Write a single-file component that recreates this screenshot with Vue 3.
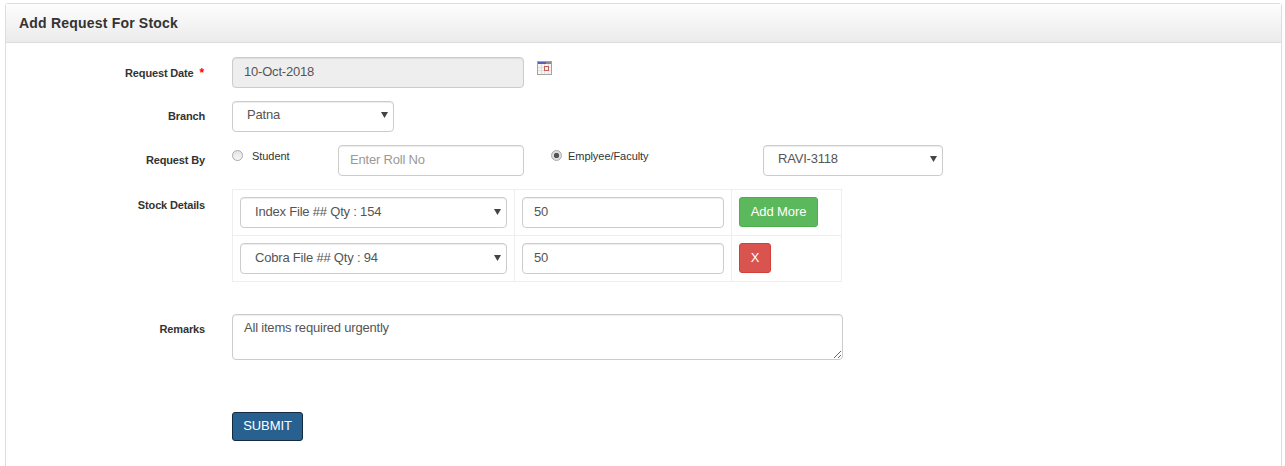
<script setup>
const rows = [
  { name: 'Index File ## Qty : 154', qty: '50', add: true },
  { name: 'Cobra File ## Qty : 94', qty: '50', add: false }
]
</script>

<template>
  <div class="page">
    <section class="panel">
      <header class="panel-head"><h1>Add Request For Stock</h1></header>
      <form class="panel-body" @submit.prevent>
        <div class="row row-date">
          <label class="lbl">Request Date <span class="req">*</span></label>
          <input class="ctl date" value="10-Oct-2018" disabled />
          <svg class="cal" width="15" height="14" viewBox="0 0 15 14">
            <rect x="0.5" y="0.5" width="14" height="13" fill="#f7f5f3" stroke="#a5a3a0" />
            <rect x="1" y="1" width="13" height="2" fill="#8c8c8c" />
            <rect x="1" y="1" width="8" height="2" fill="#5a5fb8" />
            <path d="M1 6.5h13M1 9.5h13M4.5 3v10M7.5 3v10M11.5 3v10" stroke="#e2dfdc" stroke-width="1" fill="none" />
            <rect x="7.5" y="5.5" width="4" height="4" fill="#f6eeee" stroke="#c0605e" />
          </svg>
        </div>

        <div class="row">
          <label class="lbl up">Branch</label>
          <select class="ctl sel branch"><option>Patna</option></select>
        </div>

        <div class="row">
          <label class="lbl up">Request By</label>
          <div class="by">
            <label class="radio student"><input type="radio" name="by" /><span>Student</span></label>
            <input class="ctl roll" placeholder="Enter Roll No" />
            <label class="radio staff"><input type="radio" name="by" checked /><span>Emplyee/Faculty</span></label>
            <select class="ctl sel staff-sel"><option>RAVI-3118</option></select>
          </div>
        </div>

        <div class="row row-stock">
          <label class="lbl">Stock Details</label>
          <table class="stock">
            <tbody>
              <tr v-for="r in rows" :key="r.name">
                <td class="c1"><select class="ctl sel item"><option>{{ r.name }}</option></select></td>
                <td class="c2"><input class="ctl qty" :value="r.qty" /></td>
                <td class="c3">
                  <button v-if="r.add" type="button" class="btn green">Add More</button>
                  <button v-else type="button" class="btn red">X</button>
                </td>
              </tr>
            </tbody>
          </table>
        </div>

        <div class="row row-remarks">
          <label class="lbl up">Remarks</label>
          <textarea class="ctl remarks">All items required urgently</textarea>
        </div>

        <div class="row row-submit">
          <span class="lbl"></span>
          <button type="submit" class="btn submit">SUBMIT</button>
        </div>
      </form>
    </section>
  </div>
</template>

<style>
html, body { margin: 0; overflow: hidden; background: #fff; }
</style>

<style scoped>
.page {
  height: 466px;
  padding: 3px 3px 0 5px;
  box-sizing: border-box;
  overflow: hidden;
  font-family: "Liberation Sans", Arial, sans-serif;
  color: #333;
}
.panel {
  border: 1px solid #ddd;
  border-radius: 3px 3px 0 0;
  height: 480px;
  box-sizing: border-box;
  background: #fff;
}
.panel-head {
  height: 39px;
  box-sizing: border-box;
  border-bottom: 1px solid #ddd;
  background: linear-gradient(to bottom, #fdfdfd, #ebebeb);
  padding: 0 13px;
  display: flex;
  align-items: center;
}
h1 {
  margin: 0;
  font-size: 14px;
  font-weight: 700;
  letter-spacing: 0.2px;
  color: #333;
}
.panel-body { padding: 14px 0 0; display: flex; flex-direction: column; }
.row { display: flex; align-items: flex-start; margin-bottom: 13px; }
.row-stock { margin-bottom: 32px; }
.row-remarks { margin-bottom: 52px; }
.lbl {
  flex: 0 0 199px;
  margin-right: 27px;
  text-align: right;
  font-size: 11px;
  font-weight: 700;
  letter-spacing: -0.15px;
  line-height: 14px;
  padding-top: 9px;
  color: #333;
}
.lbl.up { padding-top: 8px; }
.req { color: #f00; margin-left: 3px; margin-right: 1px; font-size: 12px; }
.ctl {
  display: block;
  box-sizing: border-box;
  height: 31px;
  border: 1px solid #ccc;
  border-radius: 4px;
  background-color: #fff;
  color: #555;
  font: 13px/20px "Liberation Sans", Arial, sans-serif;
  letter-spacing: -0.2px;
  padding: 0 11px 3px;
  box-shadow: inset 0 1px 1px rgba(0, 0, 0, 0.075);
  outline: none;
}
.ctl::placeholder { color: #999; opacity: 1; }
.date { flex: none; width: 292px; background: #eee; opacity: 1; }
.cal { flex: none; margin: 4px 0 0 13px; }
.sel {
  appearance: none;
  -webkit-appearance: none;
  padding: 0 20px 3px 14px;
  background-image: url("data:image/svg+xml,%3Csvg xmlns='http://www.w3.org/2000/svg' width='7' height='6'%3E%3Cpath d='M0 0h7L3.5 6z' fill='%23444'/%3E%3C/svg%3E");
  background-repeat: no-repeat;
  background-position: right 5px top 10px;
}
.branch { width: 162px; }
.by { display: flex; align-items: flex-start; }
.radio {
  display: flex;
  align-items: center;
  font-size: 11px;
  line-height: 14px;
  color: #333;
  padding-top: 4px;
}
.radio input {
  appearance: none;
  -webkit-appearance: none;
  box-sizing: border-box;
  width: 11px;
  height: 11px;
  margin: -2px 0 0;
  border-radius: 50%;
  border: 1px solid #a9a9a9;
  background: linear-gradient(#e4e4e4, #f6f6f6);
}
.radio input:checked {
  background: radial-gradient(circle, #555 0 2.4px, #ddd 3px);
}
.student { width: 106px; letter-spacing: -0.05px; }
.student input { margin-right: 9px; }
.roll { width: 186px; }
.staff { width: 212px; margin-left: 27px; letter-spacing: -0.05px; }
.staff input { margin-right: 6px; }
.staff-sel { width: 180px; }
.stock {
  width: 610px;
  border-collapse: collapse;
  table-layout: fixed;
}
.stock td {
  border: 1px solid #eee;
  padding: 7px;
  height: 31px;
  box-sizing: content-box;
  vertical-align: top;
}
.c1 { width: 267px; }
.c2 { width: 202px; }
.item { width: 100%; padding-bottom: 1px; background-position: right 5px top 11px; }
.qty { width: 100%; padding-bottom: 2px; }
.btn {
  display: block;
  box-sizing: border-box;
  height: 30px;
  border: 1px solid transparent;
  border-radius: 3px;
  color: #fff;
  font: 13px/20px "Liberation Sans", Arial, sans-serif;
  letter-spacing: -0.1px;
  padding: 0;
  white-space: nowrap;
}
.green { background: #5cb85c; border-color: #4cae4c; width: 79px; }
.red { background: #d9534f; border-color: #d43f3a; width: 32px; }
.remarks {
  width: 611px;
  height: 46px;
  padding: 3px 11px;
  resize: vertical;
}
.submit {
  width: 71px;
  height: 29px;
  padding-bottom: 2px;
  background: #286090;
  border-color: #122b40;
}
.row-submit .lbl { padding: 0; }
</style>
